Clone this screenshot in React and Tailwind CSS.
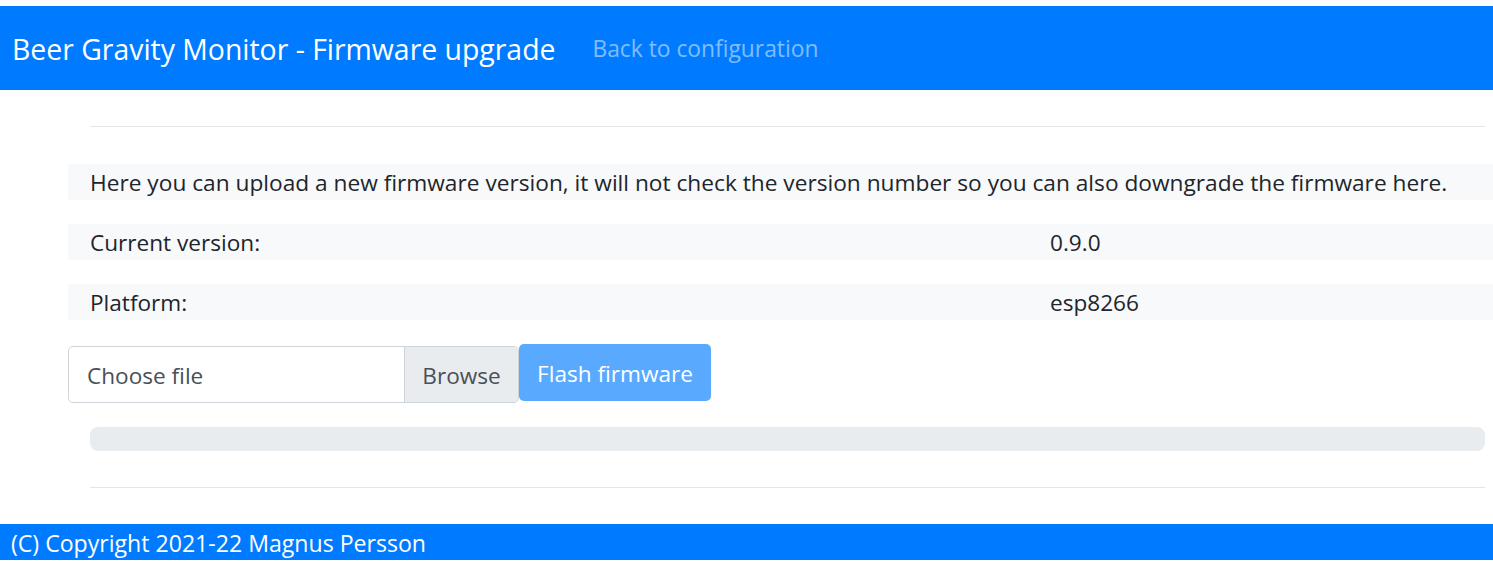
import React from 'react';

function InfoRow({ label, value }) {
  return (
    <div className="flex items-center h-9 pt-[2px] bg-[#f8f9fa] text-[22.6px] text-[#212529]">
      <div className="w-[982px] pl-[22px]">{label}</div>
      <div>{value}</div>
    </div>
  );
}

export default function App() {
  return (
    <div className="min-h-[577px] bg-white pt-[6px] font-['Open_Sans',sans-serif]">
      {/* navbar */}
      <nav className="h-[84px] bg-[#007bff] flex items-center pl-[12px] pt-[3px]">
        <span className="text-[28.4px] text-white">Beer Gravity Monitor - Firmware upgrade</span>
        <a className="ml-[37px] text-[22.8px] text-white/50">Back to configuration</a>
      </nav>

      <main className="pl-[68px]">
        <hr className="mt-[36px] ml-[22px] mr-[8px] border-t border-[#e5e5e5]" />

        <div className="mt-[37px] flex items-center h-9 pt-[2px] bg-[#f8f9fa] text-[22.7px] text-[#212529] pl-[22px]">
          Here you can upload a new firmware version, it will not check the version number so you can also downgrade the firmware here.
        </div>

        <div className="mt-6 flex flex-col gap-6">
          <InfoRow label="Current version:" value="0.9.0" />
          <InfoRow label="Platform:" value="esp8266" />
        </div>

        <div className="mt-6 flex items-start">
          <div className="mt-[2px] w-[451px] h-[57px] flex border border-[#ced4da] rounded-[5px] overflow-hidden text-[22.6px] text-[#495057]">
            <div className="flex-1 flex items-center pl-[18px] pt-[2px]">Choose file</div>
            <div className="w-[114px] flex items-center justify-center pt-[2px] bg-[#e9ecef] border-l border-[#ced4da]">Browse</div>
          </div>
          <button className="w-[192px] h-[57px] pt-[2px] bg-[#59a9ff] rounded-[5px] text-[22.6px] text-white">Flash firmware</button>
        </div>

        <div className="mt-[24px] ml-[22px] mr-[8px] h-[24px] rounded-[8px] bg-[#e9ecef]"></div>

        <hr className="mt-[36px] ml-[22px] mr-[8px] border-t border-[#e5e5e5]" />
      </main>

      <footer className="mt-[36px] h-9 pt-[3px] bg-[#007bff] flex items-center pl-[11px] text-[23.1px] text-white">
        (C) Copyright 2021-22 Magnus Persson
      </footer>
    </div>
  );
}
